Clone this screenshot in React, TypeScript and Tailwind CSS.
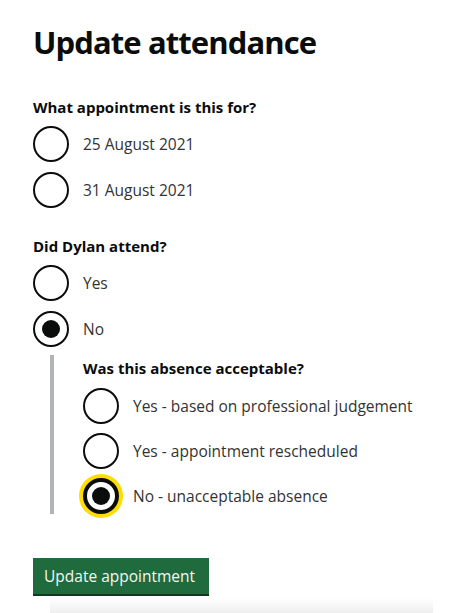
import React from 'react';

interface RadioProps {
    label: string;
    checked?: boolean;
    focused?: boolean;
}

const Radio = ({ label, checked, focused }: RadioProps) => {
    return (
        <div className="flex items-center h-9">
            <span
                className={`relative shrink-0 w-9 h-9 rounded-full bg-white flex items-center justify-center ${focused
                    ? 'border-[4px] border-[#0b0c0c] shadow-[0_0_0_4px_#ffdd00]'
                    : 'border-2 border-[#0b0c0c]'
                    }`}
            >
                {checked && <span className="block w-[18px] h-[18px] rounded-full bg-[#0b0c0c]" />}
            </span>
            <span className="ml-[14px] text-[15.5px] leading-5 text-[#333333]">{label}</span>
        </div>
    );
};

const Question = ({ children }: { children: React.ReactNode }) => (
    <div className="text-[15px] leading-5 font-bold text-[#0b0c0c]">{children}</div>
);

export default function App() {
    return (
        <div className="min-h-screen bg-white pl-[33px] pt-[24px] font-['Open_Sans',sans-serif]">
            <h1 className="text-[31px] leading-9 font-bold text-[#0b0c0c] tracking-[-0.9px]">Update attendance</h1>

            {/* appointment */}
            <div className="mt-[37px]">
                <Question>What appointment is this for?</Question>
                <div className="mt-[9px] flex flex-col gap-[10px]">
                    <Radio label="25 August 2021" />
                    <Radio label="31 August 2021" />
                </div>
            </div>

            {/* attendance */}
            <div className="mt-[28px]">
                <Question>Did Dylan attend?</Question>
                <div className="mt-[9px] flex flex-col gap-[10px]">
                    <Radio label="Yes" />
                    <Radio label="No" checked />
                </div>
                <div className="mt-[8px] ml-[17px] border-l-[4px] border-[#b1b4b6] pl-[29px] pt-[3px]">
                    <Question>Was this absence acceptable?</Question>
                    <div className="mt-[10px] flex flex-col gap-[9px]">
                        <Radio label="Yes - based on professional judgement" />
                        <Radio label="Yes - appointment rescheduled" />
                        <Radio label="No - unacceptable absence" checked focused />
                    </div>
                </div>
            </div>

            <button className="mt-[44px] h-9 pl-[11px] pr-[14px] bg-[#1f6b3d] text-[#f4f7f4] text-[15.5px] leading-5 shadow-[0_2px_0_#0f3a20] block">
                Update appointment
            </button>

            <div className="mt-[4px] ml-[17px] w-[383px] h-[15px] bg-gradient-to-b from-white to-[#efefef]" />
        </div>
    );
}
